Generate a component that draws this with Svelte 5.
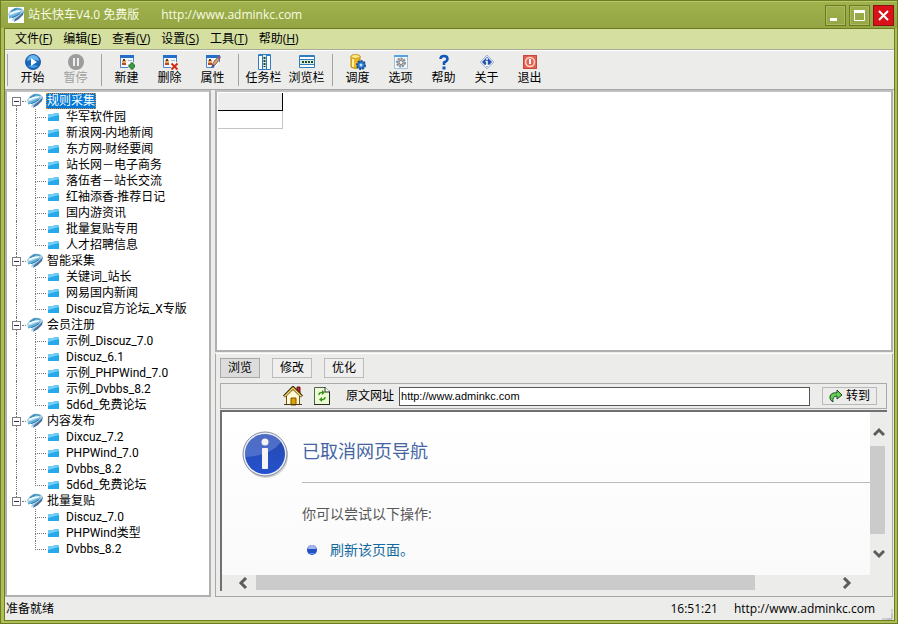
<script>
	let groups = $state([
		{ name: '规则采集', open: true, items: ['华军软件园', '新浪网-内地新闻', '东方网-财经要闻', '站长网－电子商务', '落伍者－站长交流', '红袖添香-推荐日记', '国内游资讯', '批量复贴专用', '人才招聘信息'] },
		{ name: '智能采集', open: true, items: ['关键词_站长', '网易国内新闻', 'Discuz官方论坛_X专版'] },
		{ name: '会员注册', open: true, items: ['示例_Discuz_7.0', 'Discuz_6.1', '示例_PHPWind_7.0', '示例_Dvbbs_8.2', '5d6d_免费论坛'] },
		{ name: '内容发布', open: true, items: ['Dixcuz_7.2', 'PHPWind_7.0', 'Dvbbs_8.2', '5d6d_免费论坛'] },
		{ name: '批量复贴', open: true, items: ['Discuz_7.0', 'PHPWind类型', 'Dvbbs_8.2'] }
	]);

	const menus = [['文件', 'F'], ['编辑', 'E'], ['查看', 'V'], ['设置', 'S'], ['工具', 'T'], ['帮助', 'H']];

	const tools = [
		[['start', '开始'], ['pause', '暂停']],
		[['new', '新建'], ['delete', '删除'], ['edit', '属性']],
		[['tasks', '任务栏'], ['browse', '浏览栏']],
		[['schedule', '调度'], ['options', '选项'], ['help', '帮助'], ['about', '关于'], ['exit', '退出']]
	];

	const tabs = ['浏览', '修改', '优化'];
	let tab = $state('浏览');
	let selected = $state('规则采集');
	let url = $state('http://www.adminkc.com');
</script>

{#snippet logo()}
	<svg class="logo" viewBox="0 0 16 16" width="16" height="16">
		<path d="M0 7 3 3l5-2.500 5 .5 3 2.500-1 3-4 4-4 3-3 .5 1-3-4-.5z" fill="#a9d3ea" />
		<path d="M2 4.500 7 1l5 .5 2 1.500-5-.5-5 2.500z" fill="#3f93bd" />
		<path d="M16 4l-1 4-4 4-5 3 1-3 4-3z" fill="#4c6f9c" />
		<path d="M1 9l5-1.500 5-3 3 0-3 3-5 3-5 1z" fill="#69b4dc" />
		<path d="M2 7l4-2 6-1" stroke="#f3fbff" stroke-width="1.500" fill="none" />
		<path d="M4 10.500l5-2 3-2" stroke="#2e79a9" fill="none" />
	</svg>
{/snippet}

{#snippet card()}
	<path d="M1.500 3v10.500H9M14.500 3v5" stroke="#4f86c8" />
	<path d="M2 4h12v6l-4 3H2z" fill="#f3f6fb" />
	<path d="M1 1h14v3H1z" fill="#2470c9" />
	<path d="M3 6h4v3H3z" fill="#e5a85c" /><path d="M4 5h2v2H4z" fill="#5b3a26" /><path d="M3 9h4v2H3z" fill="#b0492e" />
	<path d="M9 6.500h4" stroke="#9ab0cf" />
{/snippet}

{#snippet icon(name)}
	<svg viewBox="0 0 16 16" width="16" height="16" fill="none">
		{#if name === 'start'}
			<circle cx="8" cy="8" r="7.500" fill="#1668be" stroke="#2a5d9c" />
			<path d="M2 7a6 6 0 0 1 12 0Q8 4 2 7z" fill="#67b5ef" />
			<path d="M3 12q5 4 10 0-5-2-10 0z" fill="#3f9be4" />
			<path d="M6 4l6 4-6 4z" fill="#fff" />
		{:else if name === 'pause'}
			<circle cx="8" cy="8" r="8" fill="#9c9c9c" />
			<path d="M5 4h2v8H5zM9 4h2v8H9z" fill="#eee" />
		{:else if name === 'new'}
			{@render card()}
			<path d="M13 8.500v7M9.500 12h7" stroke="#146b20" stroke-width="3" />
			<path d="M13 9.500v5M10.500 12h5" stroke="#53b84e" />
		{:else if name === 'delete'}
			{@render card()}
			<path d="M9.500 9.500l6 6M15.500 9.500l-6 6" stroke="#d22d18" stroke-width="2" />
		{:else if name === 'edit'}
			{@render card()}
			<path d="M7 13l1-4 5-6 2 2-5 6z" fill="#e2a064" stroke="#8a6453" />
			<path d="M12 3l2-2 2 2-2 3z" fill="#7d5f92" /><path d="M6 14l2-4 2 2z" fill="#38509c" />
		{:else if name === 'tasks'}
			<path d="M2.500 .5h12v15h-12z" fill="#fff" stroke="#2f7fc0" />
			<path d="M6.500 1v14M10.500 1v14" stroke="#2f7fc0" />
			<path d="M3 1.500h3M11 1.500h3" stroke="#2f7fc0" />
			<path d="M7 1h3v14H7z" fill="#dcebe0" />
			<path d="M8.500 3v10" stroke="#1d4b2c" stroke-width="2" stroke-dasharray="2 1" />
		{:else if name === 'browse'}
			<path d="M.5 1.500h15v12H.5z" fill="#fff" stroke="#2f7fc0" />
			<path d="M1 2.500h14M1 5.500h14M1 10.500h14" stroke="#2f7fc0" />
			<path d="M1 6h14v4H1z" fill="#dcebe0" />
			<path d="M3 8h11" stroke="#1d4b2c" stroke-width="2" stroke-dasharray="2 1" />
		{:else if name === 'schedule'}
			<path d="M1 2v11q4 3 9 0V2z" fill="#efb719" stroke="#b98c18" />
			<ellipse cx="5.500" cy="2.500" rx="4.500" ry="2" fill="#ffe984" stroke="#c49a25" />
			<path d="M3 5v8" stroke="#fff1a2" stroke-width="2" />
			<circle cx="11" cy="11" r="4" fill="#2c79cb" stroke="#1b5194" stroke-width="2" stroke-dasharray="2 1" />
			<circle cx="11" cy="11" r="1.500" fill="#bde1fb" />
		{:else if name === 'options'}
			<path d="M1.500 1.500h13v13h-13z" fill="#f4f8fb" stroke="#9fc1dc" /><path d="M1 1h14v2H1z" fill="#57a4dc" />
			<circle cx="8" cy="8.500" r="4" fill="#c2c6ca" stroke="#858b91" stroke-width="2" stroke-dasharray="2 1" />
			<circle cx="8" cy="8.500" r="2" fill="#f4f4f4" stroke="#777" />
		{:else if name === 'help'}
			<path d="M4.500 5Q4.500 2 8 2t3.500 3Q11.500 7 8 8.500V11" stroke="#1355b8" stroke-width="2.500" />
			<path d="M6.500 12.500h3v3h-3z" fill="#1355b8" />
		{:else if name === 'about'}
			<path d="M8 1l7 7-7 7-7-7z" fill="#d4e2f5" stroke="#a9b9d4" />
			<path d="M8 3l5 5-5 5-5-5z" fill="#2450a8" />
			<path d="M8 4v2M6.500 7.500H8V11M6 11.500h4" stroke="#fff" stroke-width="1.500" />
		{:else if name === 'exit'}
			<rect x="1.500" y="1.500" width="13" height="13" fill="#e8604f" stroke="#c8473b" />
			<circle cx="8" cy="8" r="4.500" stroke="#fbdad4" stroke-width="1.500" /><path d="M8 5v5" stroke="#fff" stroke-width="2" />
		{/if}
	</svg>
{/snippet}

<div class="window">
	<header class="titlebar">
		<span class="titleicon">{@render logo()}</span>
		<h1>站长快车V4.0 免费版</h1>
		<span class="site">http://www.adminkc.com</span>
		<div class="winbtns">
			<button aria-label="最小化"><svg width="19" height="19"><path d="M4 12h7v3H4z" fill="#fff" /></svg></button>
			<button aria-label="最大化"><svg width="19" height="19" fill="none"><path d="M4.500 5v9.500h10V5" stroke="#fff" /><path d="M4 4h11v3H4z" fill="#fff" /></svg></button>
			<button class="close" aria-label="关闭"><svg width="19" height="19"><path d="M5 5l9 9M14 5l-9 9" stroke="#fff" stroke-width="2" /></svg></button>
		</div>
	</header>

	<div class="client">
		<nav class="menubar">
			{#each menus as [label, key]}
				<button>{label}(<u>{key}</u>)</button>
			{/each}
		</nav>

		<div class="toolbar">
			{#each tools as group}
				<div class="toolgroup">
					{#each group as [name, label]}
						<button disabled={name === 'pause'}>{@render icon(name)}<span>{label}</span></button>
					{/each}
				</div>
			{/each}
		</div>

		<main>
			<aside class="sunken">
				<ul class="tree">
					{#each groups as group, i}
						<li>
							<div class="row root" class:first={i === 0} class:end={i === groups.length - 1}>
								<span class="toggle">
									<button aria-label="展开 {group.name}" onclick={() => (group.open = !group.open)}>
										<svg width="7" height="7"><path d={group.open ? 'M1 3h5v1H1z' : 'M1 3h5v1H1zM3 1h1v5H3z'} fill="#234" /></svg>
									</button>
								</span>
								<span class="dash"></span>
								{@render logo()}
								<button class="label" class:selected={selected === group.name} onclick={() => (selected = group.name)}>{group.name}</button>
							</div>
							{#if group.open}
								<ul>
									{#each group.items as item, n}
										<li class="row">
											<span class="trunk" class:blank={i === groups.length - 1}></span>
											<span class="elbow" class:last={n === group.items.length - 1}></span>
											<svg class="folder" width="12" height="10" viewBox="0 0 12 10">
												<path d="M0 2h5l2-1h4v8H0z" fill="#27a8e8" /><path d="M0 2h5l2-1h4v2L0 6z" fill="#6fcff8" />
											</svg>
											<button class="label">{item}</button>
										</li>
									{/each}
								</ul>
							{/if}
						</li>
					{/each}
				</ul>
			</aside>

			<section class="right">
				<div class="grid sunken">
					<table>
						<thead><tr><th></th></tr></thead>
						<tbody><tr><td></td></tr></tbody>
					</table>
				</div>

				<div class="lower">
					<div class="tabs">
						{#each tabs as t}
							<button class:active={tab === t} onclick={() => (tab = t)}>{t}</button>
						{/each}
					</div>

					<form class="address" onsubmit={(e) => e.preventDefault()}>
						<button type="button" class="flat" aria-label="主页">
							<svg width="20" height="20" fill="none">
								<path d="M14 1h3v8h-3z" fill="#b82030" stroke="#711" />
								<path d="M3.500 9.500v9h13v-9l-6.500-6z" fill="#fff9d8" stroke="#765410" />
								<path d="M1 10.500l9-9 9 9" stroke="#332508" stroke-width="3" /><path d="M1.500 10.500l8.500-8.500 8.500 8.500" stroke="#f8d860" stroke-width="1.500" />
								<path d="M8 12h5v7H8z" fill="#dfa300" stroke="#7d5200" /><path d="M1 18.500h18" stroke="#493616" />
							</svg>
						</button>
						<button type="button" class="flat" aria-label="刷新">
							<svg width="18" height="20" fill="none">
								<path d="M1.500 1.500h11l4 4v13h-15z" fill="#edfbd2" stroke="#55604f" /><path d="M16.500 5v13.500H1" stroke="#242d23" /><path d="M12 1v5h5" fill="#fff" stroke="#242d23" />
								<path d="M6 9q0-3 4-2.500M12 11q0 3-4 2.500" stroke="#38931f" stroke-width="1.500" />
								<path d="M9 4l3 2.500-3 2.500zM9 11l-3 2.500 3 2.500z" fill="#38931f" />
							</svg>
						</button>
						<label for="addr">原文网址</label>
						<input id="addr" type="text" bind:value={url} />
						<button class="go">
							<svg width="14" height="14"><path d="M8 1l5 5-5 4V7Q3 7 4 13 0 11 1 7 3 3 8 4z" fill="#66cf58" stroke="#174d1d" /></svg>
							转到
						</button>
					</form>

					<div class="browser">
						<div class="view">
							<article class="page">
								<svg width="48" height="48" viewBox="0 0 48 48">
									<defs>
										<linearGradient id="blue" x2="0" y2="1"><stop stop-color="#2848ae" /><stop offset="1" stop-color="#2452cd" /></linearGradient>
									</defs>
									<circle cx="25" cy="26" r="22" fill="#aaa" opacity=".5" />
									<circle cx="24" cy="24" r="22" fill="#e9eef7" stroke="#858b9c" />
									<circle cx="24" cy="24" r="20" fill="url(#blue)" />
									<path d="M4 24a20 20 0 0 1 36-12Q30 26 4 27z" fill="#7390d9" opacity=".5" />
									<circle cx="24" cy="12" r="3.500" fill="#f4f4f4" />
									<rect x="21" y="18" width="6" height="21" rx="1" fill="#f4f4f4" />
								</svg>
								<div class="message">
									<h2>已取消网页导航</h2>
									<p>你可以尝试以下操作:</p>
									<div class="tip">
										<svg width="10" height="10"><circle cx="5" cy="5" r="5" fill="#2450c4" /><path d="M1 4a4 4 0 0 1 8 0z" fill="#a5b4ee" /><path d="M2 8q3 2 6 0z" fill="#62b2f4" /></svg>
										<a href="#refresh">刷新该页面。</a>
									</div>
								</div>
							</article>
							<div class="vscroll">
								<button aria-label="向上"><svg width="12" height="10"><path d="M1 8l5-5 5 5" /></svg></button>
								<div class="track"><div class="thumb"></div></div>
								<button aria-label="向下"><svg width="12" height="10"><path d="M1 2l5 5 5-5" /></svg></button>
							</div>
						</div>
						<div class="hscroll">
							<button aria-label="向左"><svg width="10" height="12"><path d="M8 1L3 6l5 5" /></svg></button>
							<div class="track"><div class="thumb"></div></div>
							<button aria-label="向右"><svg width="10" height="12"><path d="M2 1l5 5-5 5" /></svg></button>
						</div>
					</div>
				</div>
			</section>
		</main>

		<footer>
			<span class="ready">准备就绪</span>
			<span>16:51:21</span>
			<span>http://www.adminkc.com</span>
			<svg class="grip" width="12" height="12"><path d="M11 1v10H1M11 6v5H6" stroke="#b5b5b5" fill="none" /></svg>
		</footer>
	</div>
</div>

<style>
	:global(body) {
		margin: 0;
	}

	.window {
		box-sizing: border-box;
		min-height: 100vh;
		display: flex;
		flex-direction: column;
		padding: 0 3px 3px;
		border: 1px solid #6e7b21;
		background: #aebf57;
		font: 12px/16px "Open Sans", "Noto Sans CJK SC", sans-serif;
		color: #000;
	}

	svg {
		display: block;
		flex: none;
	}

	button {
		padding: 0;
		border: 0;
		background: none;
		font: inherit;
		color: inherit;
		white-space: nowrap;
	}

	ul {
		list-style: none;
		margin: 0;
		padding: 0;
	}

	.titlebar {
		display: flex;
		align-items: center;
		height: 27px;
		margin: 0 -3px;
		padding: 0 3px 0 7px;
		border-top: 1px solid #b9c967;
		box-sizing: border-box;
		background: linear-gradient(#9fb14c, #94a644);
		color: #f8fbe4;
	}

	.titleicon {
		background: #fff;
		margin-right: 4px;
	}

	h1 {
		margin: 0 22px 0 0;
		font-size: 12px;
		font-weight: normal;
	}

	.winbtns {
		display: flex;
		gap: 3px;
		margin-left: auto;
	}

	.winbtns button {
		border: 1px solid #6d7b20;
		box-shadow: inset 0 0 0 1px #acbb63;
	}

	.winbtns .close {
		background: #d9121a;
		border-color: #8c1212;
		box-shadow: none;
	}

	.client {
		flex: 1;
		display: flex;
		flex-direction: column;
		border: 1px solid #6e7b21;
		margin: 0 -1px -1px 0;
		background: #ececeb;
	}

	.menubar {
		display: flex;
		gap: 11px;
		height: 20px;
		padding-left: 10px;
		background: #d4dfa0;
		border-bottom: 1px solid #a8aa9a;
	}

	.toolbar {
		display: flex;
		padding: 3px 2px;
		border-top: 1px solid #fff;
		border-bottom: 1px solid #a5a5a5;
	}

	.toolgroup {
		display: flex;
		padding: 0 4px 0 3px;
		border-left: 1px solid #a2a2a2;
	}

	.toolgroup button {
		display: flex;
		flex-direction: column;
		align-items: center;
		width: 43px;
	}

	.toolgroup button:disabled {
		color: #a0a0a0;
	}

	main {
		flex: 1;
		display: flex;
		gap: 4px;
	}

	.sunken {
		border: 2px solid #b0b0b0;
		border-top: 2px solid #c0c0c0;
		background: #fff;
	}

	aside {
		width: 202px;
		font-family: Roboto, "Noto Sans CJK SC", sans-serif;
	}

	.tree {
		padding-top: 1px;
	}

	.row {
		display: flex;
		align-items: center;
		height: 16px;
	}

	.toggle {
		display: flex;
		flex-direction: column;
		height: 16px;
		margin-left: 5px;
	}

	.toggle::before,
	.toggle::after {
		content: "";
		flex: 1;
		margin-left: 4px;
		border-left: 1px dotted #777;
	}

	.first .toggle::before,
	.end .toggle::after {
		border-color: transparent;
	}

	.toggle button {
		border: 1px solid #7d7d7d;
		background: #fff;
	}

	.dash {
		width: 4px;
		margin: 0 1px;
		border-top: 1px dotted #777;
	}

	.trunk {
		width: 18px;
		height: 16px;
		margin-left: 9px;
		border-left: 1px dotted #777;
	}

	.trunk.blank {
		border-color: transparent;
	}

	.elbow {
		display: flex;
		flex-direction: column;
		width: 11px;
		height: 16px;
		margin-right: 2px;
	}

	.elbow::before,
	.elbow::after {
		content: "";
		flex: 1;
		border-left: 1px dotted #777;
	}

	.elbow::before {
		border-bottom: 1px dotted #777;
	}

	.elbow.last::after {
		border-color: transparent;
	}

	.label {
		padding: 0 1px;
		line-height: 16px;
	}

	.root .label {
		margin-left: 3px;
	}

	.folder + .label {
		margin-left: 5px;
	}

	.label.selected {
		background: #0078d7;
		color: #fff;
		outline: 1px dotted #e08a30;
		outline-offset: -1px;
	}

	.right {
		flex: 1;
		min-width: 0;
		display: flex;
		flex-direction: column;
		gap: 1px;
		padding-right: 1px;
	}

	.grid {
		flex: 1;
		padding: 1px 0 0 1px;
	}

	table {
		border-collapse: separate;
		border-spacing: 0;
	}

	th {
		width: 64px;
		height: 17px;
		padding: 0;
		background: #eee;
		border-right: 1px solid #000;
		border-bottom: 1px solid #000;
	}

	td {
		height: 17px;
		padding: 0;
		border-right: 1px solid #c4c4c4;
		border-bottom: 1px solid #c4c4c4;
	}

	.lower {
		display: flex;
		flex-direction: column;
		padding: 4px 5px 5px 4px;
		border: 1px solid #a8a8a8;
		border-top-color: #fff;
	}

	.tabs {
		display: flex;
		gap: 12px;
		margin-bottom: 5px;
	}

	.tabs button {
		width: 40px;
		height: 20px;
		border: 1px solid #bcbcbc;
		background: #efefef;
	}

	.tabs .active {
		background: #dcdcdc;
		border-color: #a9a9a9;
	}

	.address {
		display: flex;
		align-items: center;
		height: 24px;
		padding: 0 9px 0 62px;
		border: 1px solid #aaa;
	}

	.flat {
		margin-right: 10px;
	}

	.flat + .flat {
		margin-right: 15px;
	}

	.address label {
		margin-right: 5px;
	}

	.address input {
		flex: 1;
		min-width: 0;
		height: 19px;
		box-sizing: border-box;
		padding: 0 1px;
		border: 1px solid #555;
		background: #fff;
		font: 11px "Liberation Sans", sans-serif;
		color: #000;
	}

	.go {
		display: flex;
		align-items: center;
		justify-content: center;
		gap: 3px;
		width: 55px;
		height: 18px;
		margin-left: 12px;
		border: 1px solid #b9b9b9;
	}

	.browser {
		margin-top: 1px;
		border: solid #707070;
		border-width: 2px 0 0 2px;
	}

	.view {
		display: flex;
	}

	.page {
		flex: 1;
		display: flex;
		gap: 13px;
		padding: 18px 0 15px 19px;
		background: linear-gradient(#fff, #fafafa);
	}

	.message {
		flex: 1;
	}

	h2 {
		margin: 0 0 21px;
		padding: 8px 0 18px;
		border-bottom: 1px solid #bbb;
		font-size: 18px;
		line-height: 26px;
		font-weight: normal;
		color: #4465a2;
	}

	p {
		margin: 0 0 16px;
		font-size: 14px;
		line-height: 20px;
		color: #575757;
	}

	.tip {
		display: flex;
		align-items: center;
		gap: 13px;
		padding-left: 5px;
		font-size: 14px;
		line-height: 20px;
	}

	a {
		color: #136a9f;
		text-decoration: none;
	}

	.vscroll {
		display: flex;
		flex-direction: column;
		width: 17px;
	}

	.vscroll button {
		display: flex;
		justify-content: center;
		height: 34px;
		padding-top: 15px;
	}

	.vscroll button:last-child {
		padding-top: 8px;
	}

	.track {
		flex: 1;
	}

	.thumb {
		background: #cbcbcb;
	}

	.vscroll .thumb {
		width: 15px;
		height: 93%;
	}

	.hscroll {
		display: flex;
		height: 16px;
		margin-right: 17px;
	}

	.hscroll button {
		display: flex;
		align-items: center;
		width: 34px;
		padding-left: 16px;
	}

	.hscroll button:last-child {
		padding-left: 6px;
	}

	.hscroll .thumb {
		width: 86%;
		height: 15px;
	}

	.vscroll path,
	.hscroll path {
		fill: none;
		stroke: #5c5c5c;
		stroke-width: 3;
	}

	footer {
		display: flex;
		align-items: center;
		gap: 16px;
		height: 23px;
		padding: 0 1px;
	}

	.ready {
		margin-right: auto;
	}

	.grip {
		align-self: flex-end;
		margin-left: -10px;
	}
</style>
